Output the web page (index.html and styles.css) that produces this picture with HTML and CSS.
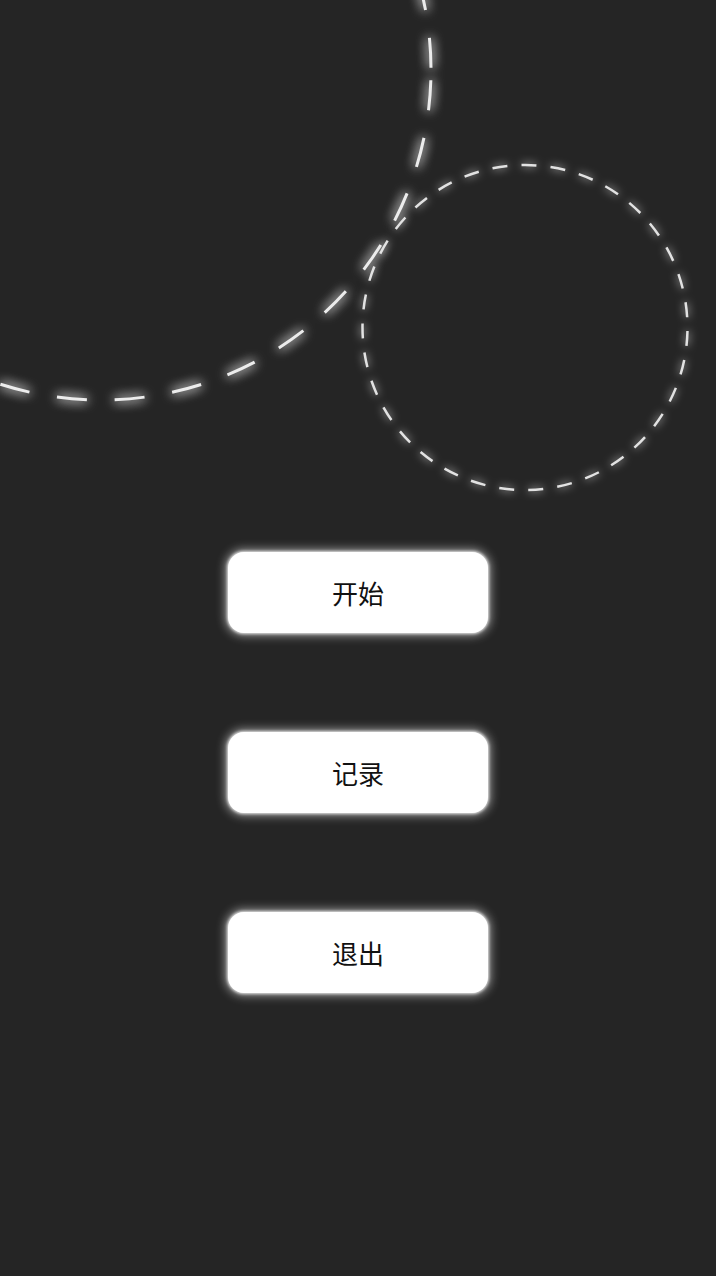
FILE: index.html
```html
<!DOCTYPE html>
<html lang="zh">
<head>
<meta charset="utf-8">
<link rel="stylesheet" href="styles.css">
</head>
<body>
<div class="screen">
  <svg class="deco" width="716" height="1276" viewBox="0 0 716 1276">
    <defs>
      <filter id="glow" x="-20%" y="-20%" width="140%" height="140%">
        <feGaussianBlur in="SourceGraphic" stdDeviation="6" result="b"/>
        <feMerge><feMergeNode in="b"/><feMergeNode in="b"/><feMergeNode in="SourceGraphic"/></feMerge>
      </filter>
      <filter id="glow2" x="-20%" y="-20%" width="140%" height="140%">
        <feGaussianBlur in="SourceGraphic" stdDeviation="4" result="b"/>
        <feMerge><feMergeNode in="b"/><feMergeNode in="SourceGraphic"/></feMerge>
      </filter>
    </defs>
    <circle cx="101" cy="70" r="330" fill="none" stroke="#ececec" stroke-width="3" stroke-dasharray="30 28" stroke-dashoffset="47.6" filter="url(#glow)"/>
    <circle cx="525" cy="327.5" r="162.5" fill="none" stroke="#e2e2e2" stroke-width="2.5" stroke-dasharray="15 14.17" stroke-dashoffset="25.67" filter="url(#glow2)"/>
  </svg>
  <div class="menu">
    <button class="btn">开始</button>
    <button class="btn">记录</button>
    <button class="btn">退出</button>
  </div>
</div>
</body>
</html>
```
FILE: styles.css
```css
html, body {
  margin: 0;
  padding: 0;
  background: #252525;
}
.screen {
  position: relative;
  width: 716px;
  height: 1276px;
  overflow: hidden;
  background: #252525;
}
.deco {
  position: absolute;
  left: 0;
  top: 0;
}
.menu {
  position: relative;
  display: flex;
  flex-direction: column;
  align-items: center;
  gap: 99px;
  padding-top: 552px;
}
.btn {
  width: 260px;
  height: 81px;
  border: none;
  border-radius: 16px;
  background: #ffffff;
  box-shadow: 0 0 10px 3px rgba(255,255,255,0.5), 0 0 3px 1px rgba(255,255,255,0.8);
  font-family: "Noto Sans CJK SC", "Noto Sans", sans-serif;
  font-size: 26px;
  color: #111;
  padding: 0;
  cursor: pointer;
}
```
